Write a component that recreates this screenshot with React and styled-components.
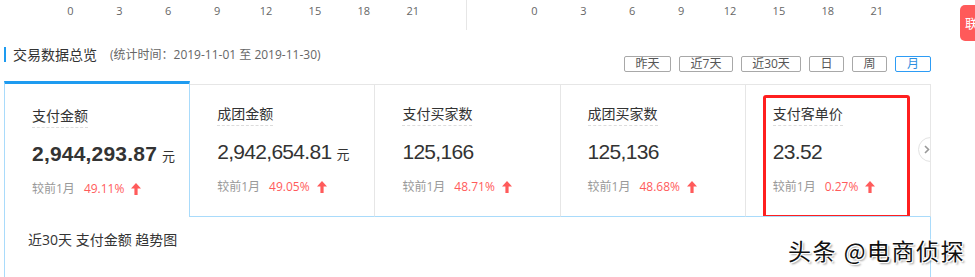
import React from "react";
import styled, { createGlobalStyle } from "styled-components";

const Global = createGlobalStyle`
  html, body { margin: 0; padding: 0; background: #fff; }
  body { font-family: "Open Sans", "Noto Sans CJK SC", sans-serif; color: #333; overflow: hidden; }
  * { box-sizing: border-box; }
`;

const Page = styled.div`
  position: relative;
  width: 975px;
  height: 277px;
  overflow: hidden;
`;

const AxisBar = styled.div`
  display: flex;
  height: 30px;
`;

const Axis = styled.div`
  display: flex;
  width: ${(p) => p.$width}px;
  padding-left: ${(p) => p.$pad}px;
  padding-top: 4px;
  border-right: ${(p) => (p.$divider ? "1px solid #e6e6e6" : "none")};
`;

const Tick = styled.span`
  width: 48.9px;
  text-align: center;
  font-size: 11px;
  line-height: 14px;
  color: #666;
`;

const SideButton = styled.div`
  position: absolute;
  top: 5px;
  left: 960px;
  width: 40px;
  height: 36px;
  border-radius: 5px;
  background: #ff5a5a;
  color: #fff;
  font-size: 13px;
  line-height: 36px;
  padding-left: 5px;
`;

const Section = styled.div`
  padding-left: 4px;
  width: 931px;
`;

const HeaderRow = styled.div`
  display: flex;
  align-items: flex-start;
  height: 51px;
  padding-top: 17px;
`;

const Title = styled.h2`
  margin: 0;
  border-left: 2px solid #1e9bf0;
  padding-left: 7px;
  font-size: 14px;
  font-weight: normal;
  line-height: 15px;
  color: #333;
  display: flex;
  align-items: center;
`;

const Sub = styled.span`
  font-size: 12px;
  color: #666;
  margin-left: 13px;
`;

const Tools = styled.div`
  margin-left: auto;
  display: flex;
  gap: 8px;
  padding-top: 9px;
`;

const RangeButton = styled.button`
  height: 16px;
  width: ${(p) => p.$w}px;
  padding: 0;
  border: 1px solid ${(p) => (p.$active ? "#2d9cf5" : "#a8a8a8")};
  border-radius: 2px;
  background: #fff;
  color: ${(p) => (p.$active ? "#2d8fe0" : "#555")};
  font-family: "Open Sans", "Noto Sans CJK SC", sans-serif;
  font-size: 12px;
  line-height: 14px;
`;

const CardRow = styled.div`
  display: flex;
  align-items: flex-end;
  height: 136px;
`;

const Card = styled.div`
  position: relative;
  flex: 1 1 0;
  height: ${(p) => (p.$active ? 136 : 133)}px;
  padding: ${(p) => (p.$active ? 20 : 17)}px 0 0 27px;
  border-top: ${(p) => (p.$active ? "3px solid #1e9bf0" : "1px solid #e6e6e6")};
  border-left: ${(p) => (p.$active ? "1px solid #a9dbfb" : "none")};
  border-right: 1px solid ${(p) => (p.$active ? "#a9dbfb" : "#e6e6e6")};
  border-bottom: ${(p) => (p.$active ? "none" : "1px solid #a9dbfb")};
  overflow: hidden;
`;

const Label = styled.div`
  display: inline-block;
  font-size: 14px;
  line-height: 18px;
  color: #333;
  padding-bottom: 2px;
  border-bottom: 1px dashed #dcdcdc;
`;

const ValueLine = styled.div`
  margin-top: 14px;
  display: flex;
  align-items: baseline;
  height: 26px;
`;

const Value = styled.span`
  font-family: "Liberation Sans", Arial, sans-serif;
  font-size: 21px;
  font-weight: ${(p) => (p.$bold ? "bold" : "normal")};
  color: #333;
  letter-spacing: ${(p) => (p.$bold ? "0.2px" : "-0.7px")};
`;

const Unit = styled.span`
  font-size: 13px;
  margin-left: 5px;
  color: #333;
`;

const Compare = styled.div`
  margin-top: 13px;
  display: flex;
  align-items: center;
  font-size: 12px;
  line-height: 16px;
  color: #999;
`;

const Rate = styled.span`
  color: #ff5b5b;
  margin-left: 9px;
`;

const UpArrow = styled.svg`
  margin-left: 7px;
`;

const Highlight = styled.div`
  position: absolute;
  left: 17px;
  top: 10px;
  width: 147px;
  height: 123px;
  border: 3px solid #ff1f1f;
  border-radius: 3px;
`;

const NextButton = styled.div`
  position: absolute;
  right: -13px;
  top: 52px;
  width: 25px;
  height: 25px;
  border-radius: 50%;
  border: 1px solid #e3e3e3;
  background: #fff;
  display: flex;
  align-items: center;
  padding-left: 5px;
`;

const Panel = styled.div`
  height: 60px;
  border-left: 1px solid #a9dbfb;
  border-right: 1px solid #a9dbfb;
  padding: 14px 0 0 23px;
`;

const PanelTitle = styled.div`
  font-size: 14px;
  line-height: 18px;
  color: #333;
`;

const Watermark = styled.div`
  position: absolute;
  left: 788px;
  top: 236px;
  font-family: "Noto Sans CJK SC", sans-serif;
  font-size: 23px;
  line-height: 29px;
  letter-spacing: 1.5px;
  color: #111;
  text-shadow: 1px 1px 0 #fff, -1px -1px 0 #fff, 1px -1px 0 #fff, -1px 1px 0 #fff, 2px 2px 2px rgba(0,0,0,0.4);
  white-space: nowrap;
`;

const ticks = [0, 3, 6, 9, 12, 15, 18, 21];

const cards = [
  { label: "支付金额", value: "2,944,293.87", unit: "元", rate: "49.11%", bold: true, active: true },
  { label: "成团金额", value: "2,942,654.81", unit: "元", rate: "49.05%" },
  { label: "支付买家数", value: "125,166", rate: "48.71%" },
  { label: "成团买家数", value: "125,136", rate: "48.68%" },
  { label: "支付客单价", value: "23.52", rate: "0.27%", last: true },
];

const ranges = [
  { t: "昨天", w: 47 },
  { t: "近7天", w: 54 },
  { t: "近30天", w: 60 },
  { t: "日", w: 35 },
  { t: "周", w: 35 },
  { t: "月", w: 36, active: true },
];

export default function App() {
  return (
    <Page>
      <Global />
      <AxisBar>
        <Axis $width={467} $pad={46} $divider>
          {ticks.map((t) => (
            <Tick key={t}>{t}</Tick>
          ))}
        </Axis>
        <Axis $width={508} $pad={43}>
          {ticks.map((t) => (
            <Tick key={t}>{t}</Tick>
          ))}
        </Axis>
      </AxisBar>
      <SideButton>联</SideButton>
      <Section>
        <HeaderRow>
          <Title>
            交易数据总览<Sub>(统计时间：2019-11-01 至 2019-11-30)</Sub>
          </Title>
          <Tools>
            {ranges.map((r) => (
              <RangeButton key={r.t} $w={r.w} $active={r.active}>
                {r.t}
              </RangeButton>
            ))}
          </Tools>
        </HeaderRow>
        <CardRow>
          {cards.map((c) => (
            <Card key={c.label} $active={c.active}>
              <Label>{c.label}</Label>
              <ValueLine>
                <Value $bold={c.bold}>{c.value}</Value>
                {c.unit && <Unit>{c.unit}</Unit>}
              </ValueLine>
              <Compare>
                较前1月<Rate>{c.rate}</Rate>
                <UpArrow width="10" height="12" viewBox="0 0 10 12">
                  <path d="M5 0 L10 5.5 H6.6 V12 H3.4 V5.5 H0 Z" fill="#ff5b5b" />
                </UpArrow>
              </Compare>
              {c.last && <Highlight />}
              {c.last && (
                <NextButton>
                  <svg width="6" height="9" viewBox="0 0 6 9">
                    <path d="M1 1 L4.5 4.5 L1 8" stroke="#999" strokeWidth="1.6" fill="none" />
                  </svg>
                </NextButton>
              )}
            </Card>
          ))}
        </CardRow>
        <Panel>
          <PanelTitle>近30天 支付金额 趋势图</PanelTitle>
        </Panel>
      </Section>
      <Watermark>头条 @电商侦探</Watermark>
    </Page>
  );
}
